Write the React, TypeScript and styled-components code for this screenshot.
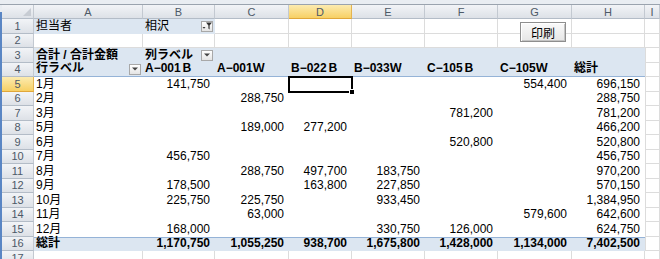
import styled, {createGlobalStyle, css} from "styled-components";

const GlobalStyle = createGlobalStyle`
  html, body {
    margin: 0;
    padding: 0;
    background: #fff;
    overflow: hidden;
  }
  body {
    font-family: "Liberation Sans", "Noto Sans CJK JP", sans-serif;
  }
`

const COLUMNS = ["A", "B", "C", "D", "E", "F", "G", "H", "I"]
const PRODUCTS = ["A−001Ｂ", "A−001Ｗ", "B−022Ｂ", "B−033Ｗ", "C−105Ｂ", "C−105Ｗ", "総計"]

type MonthRow = { label: string, values: string[] }

const MONTHS: MonthRow[] = [
    {label: "1月", values: ["141,750", "", "", "", "", "554,400", "696,150"]},
    {label: "2月", values: ["", "288,750", "", "", "", "", "288,750"]},
    {label: "3月", values: ["", "", "", "", "781,200", "", "781,200"]},
    {label: "5月", values: ["", "189,000", "277,200", "", "", "", "466,200"]},
    {label: "6月", values: ["", "", "", "", "520,800", "", "520,800"]},
    {label: "7月", values: ["456,750", "", "", "", "", "", "456,750"]},
    {label: "8月", values: ["", "288,750", "497,700", "183,750", "", "", "970,200"]},
    {label: "9月", values: ["178,500", "", "163,800", "227,850", "", "", "570,150"]},
    {label: "10月", values: ["225,750", "225,750", "", "933,450", "", "", "1,384,950"]},
    {label: "11月", values: ["", "63,000", "", "", "", "579,600", "642,600"]},
    {label: "12月", values: ["168,000", "", "", "330,750", "126,000", "", "624,750"]},
]
const TOTALS = ["1,170,750", "1,055,250", "938,700", "1,675,800", "1,428,000", "1,134,000", "7,402,500"]

const Arrow = () => (
    <svg width="6" height="4" viewBox="0 0 6 4">
        <path d="M0 0.5 H6 L3 3.5 Z" fill="#444"/>
    </svg>
)

const Funnel = () => (
    <svg width="10" height="8" viewBox="0 0 10 8">
        <path d="M4 0.5 H10 L7.6 3.5 V7.5 L6.4 6.6 V3.5 Z" fill="#333"/>
        <path d="M0.5 5 H3.5 L2 6.8 Z" fill="#333"/>
    </svg>
)

export default function App() {
    return (
        <Page>
            <GlobalStyle/>
            <TopStrip/>
            <Body>
                <LeftEdge/>
                <Sheet>
                    <Corner/>
                    {COLUMNS.map(c => <ColHead key={c} $active={c === "D"}>{c}</ColHead>)}

                    {/* row 1: report filter */}
                    <RowHead>1</RowHead>
                    <Cell $tone="pivot">担当者</Cell>
                    <Cell $tone="pivot">相沢<DropButton><Funnel/></DropButton></Cell>
                    <Cell $tone="grid"/>
                    <Cell $tone="grid"/>
                    <Cell $tone="grid"/>
                    <Cell $tone="grid"/>
                    <Cell $tone="grid"><PrintButton>印刷</PrintButton></Cell>
                    <Cell $tone="grid"/>
                    <Cell $tone="grid"/>

                    {/* row 2 */}
                    <RowHead>2</RowHead>
                    {COLUMNS.map(c => <Cell key={c} $tone="grid"/>)}

                    {/* row 3 */}
                    <RowHead>3</RowHead>
                    <Cell $tone="pivot" $bold>合計 / 合計金額</Cell>
                    <Cell $tone="pivot" $bold>列ラベル<DropButton><Arrow/></DropButton></Cell>
                    {PRODUCTS.slice(1).map(p => <Cell key={p} $tone="pivot"/>)}
                    <Cell $tone="grid" $lead/>

                    {/* row 4 */}
                    <RowHead>4</RowHead>
                    <Cell $tone="pivot" $bold $rule="bottom">行ラベル<DropButton><Arrow/></DropButton></Cell>
                    {PRODUCTS.map(p => <Cell key={p} $tone="pivot" $bold $rule="bottom">{p}</Cell>)}
                    <Cell $tone="grid" $lead/>

                    {MONTHS.map((m, i) => [
                        <RowHead key={m.label + "h"} $active={i === 0}>{i + 5}</RowHead>,
                        <Cell key={m.label} $tone="plain">{m.label}</Cell>,
                        ...m.values.map((v, j) => (
                            <Cell key={m.label + j} $tone="plain" $right $selected={i === 0 && j === 2}>{v}</Cell>
                        )),
                        <Cell key={m.label + "i"} $tone="grid" $lead/>,
                    ])}

                    {/* row 16: grand total */}
                    <RowHead>16</RowHead>
                    <Cell $tone="pivot" $bold $rule="top">総計</Cell>
                    {TOTALS.map(t => <Cell key={t} $tone="pivot" $bold $right $rule="top">{t}</Cell>)}
                    <Cell $tone="grid" $lead/>

                    <RowHead>17</RowHead>
                    {COLUMNS.map(c => <Cell key={c} $tone="grid"/>)}
                </Sheet>
            </Body>
        </Page>
    )
}

const Page = styled.div`
    width: 660px;
    height: 259px;
    overflow: hidden;
    display: flex;
    flex-direction: column;
`
const TopStrip = styled.div`
    height: 4px;
    flex: none;
    background: #e9edf2;
    border-bottom: 1px solid #9aa3ae;
`
const Body = styled.div`
    display: flex;
    flex: 1;
    min-height: 0;
`
const LeftEdge = styled.div`
    width: 2px;
    flex: none;
    background: linear-gradient(#e9edf2 0, #e9edf2 7px, #5a86c4 7px);
`
const Sheet = styled.div`
    flex: 1;
    display: grid;
    grid-template-columns: 32px 109px 72px 74px 63px 73px 73px 74px 73px 1fr;
    grid-template-rows: 14px repeat(17, 14.5px);
    font-size: 12px;
    color: #000;
`
const headGray = css`
    background: linear-gradient(#f2f4f7, #dde1e7);
    border-right: 1px solid #c3c9d1;
    border-bottom: 1px solid #b3bcc7;
`
const headGold = css`
    background: linear-gradient(#fcebb0, #f7d064);
    border-right: 1px solid #e4b451;
    border-bottom: 1px solid #e0a73a;
`
const Corner = styled.div`
    box-sizing: border-box;
    position: relative;
    ${headGray};

    &::after {
        content: "";
        position: absolute;
        right: 2px;
        bottom: 2px;
        border-left: 8px solid transparent;
        border-bottom: 8px solid #c7ccd3;
    }
`
const ColHead = styled.div<{ $active?: boolean }>`
    box-sizing: border-box;
    display: flex;
    align-items: center;
    justify-content: center;
    font-size: 11px;
    color: #4d5967;
    ${p => p.$active ? headGold : headGray};
`
const RowHead = styled.div<{ $active?: boolean }>`
    box-sizing: border-box;
    display: flex;
    align-items: center;
    justify-content: center;
    font-size: 11px;
    color: #4d5967;
    ${p => p.$active ? headGold : headGray};
`

type Tone = "grid" | "pivot" | "plain"

const Cell = styled.div<{
    $tone: Tone
    $right?: boolean
    $bold?: boolean
    $rule?: "top" | "bottom"
    $lead?: boolean
    $selected?: boolean
}>`
    box-sizing: border-box;
    position: relative;
    display: flex;
    align-items: flex-end;
    justify-content: ${p => p.$right ? "flex-end" : "space-between"};
    padding: 0 ${p => p.$right ? 5 : 2}px 1px 2px;
    line-height: 13px;
    white-space: nowrap;
    font-weight: ${p => p.$bold ? 700 : 400};
    background: ${p => p.$tone === "pivot" ? "#dce6f1" : "#fff"};
    ${p => p.$tone === "grid" && css`
        border-right: 1px solid #dcdcdc;
        border-bottom: 1px solid #dcdcdc;
    `}
    ${p => p.$lead && css`border-left: 1px solid #dcdcdc;`}
    ${p => p.$rule === "bottom" && css`border-bottom: 1px solid #95b3d7;`}
    ${p => p.$rule === "top" && css`border-top: 1px solid #95b3d7;`}
    ${p => p.$selected && css`
        outline: 2px solid #000;
        outline-offset: -1px;
        z-index: 1;

        &::after {
            content: "";
            position: absolute;
            right: -3px;
            bottom: -3px;
            width: 4px;
            height: 4px;
            background: #000;
            border: 1px solid #fff;
        }
    `}
`
const DropButton = styled.span`
    box-sizing: border-box;
    flex: none;
    align-self: center;
    width: 12px;
    height: 11px;
    margin-top: 1px;
    display: flex;
    align-items: center;
    justify-content: center;
    border: 1px solid #a8a8a8;
    background: linear-gradient(#ffffff, #e4e4e4);
`
const PrintButton = styled.button`
    position: absolute;
    left: 22px;
    top: 3px;
    z-index: 2;
    width: 46px;
    height: 20px;
    padding: 0;
    font: 12px "Noto Sans CJK JP", sans-serif;
    color: #000;
    background: linear-gradient(#fafafa, #e6e6e6);
    border: 1px solid #8e8e8e;
    box-shadow: inset 1px 1px #fff, inset -1px -1px #c4c4c4;
`
